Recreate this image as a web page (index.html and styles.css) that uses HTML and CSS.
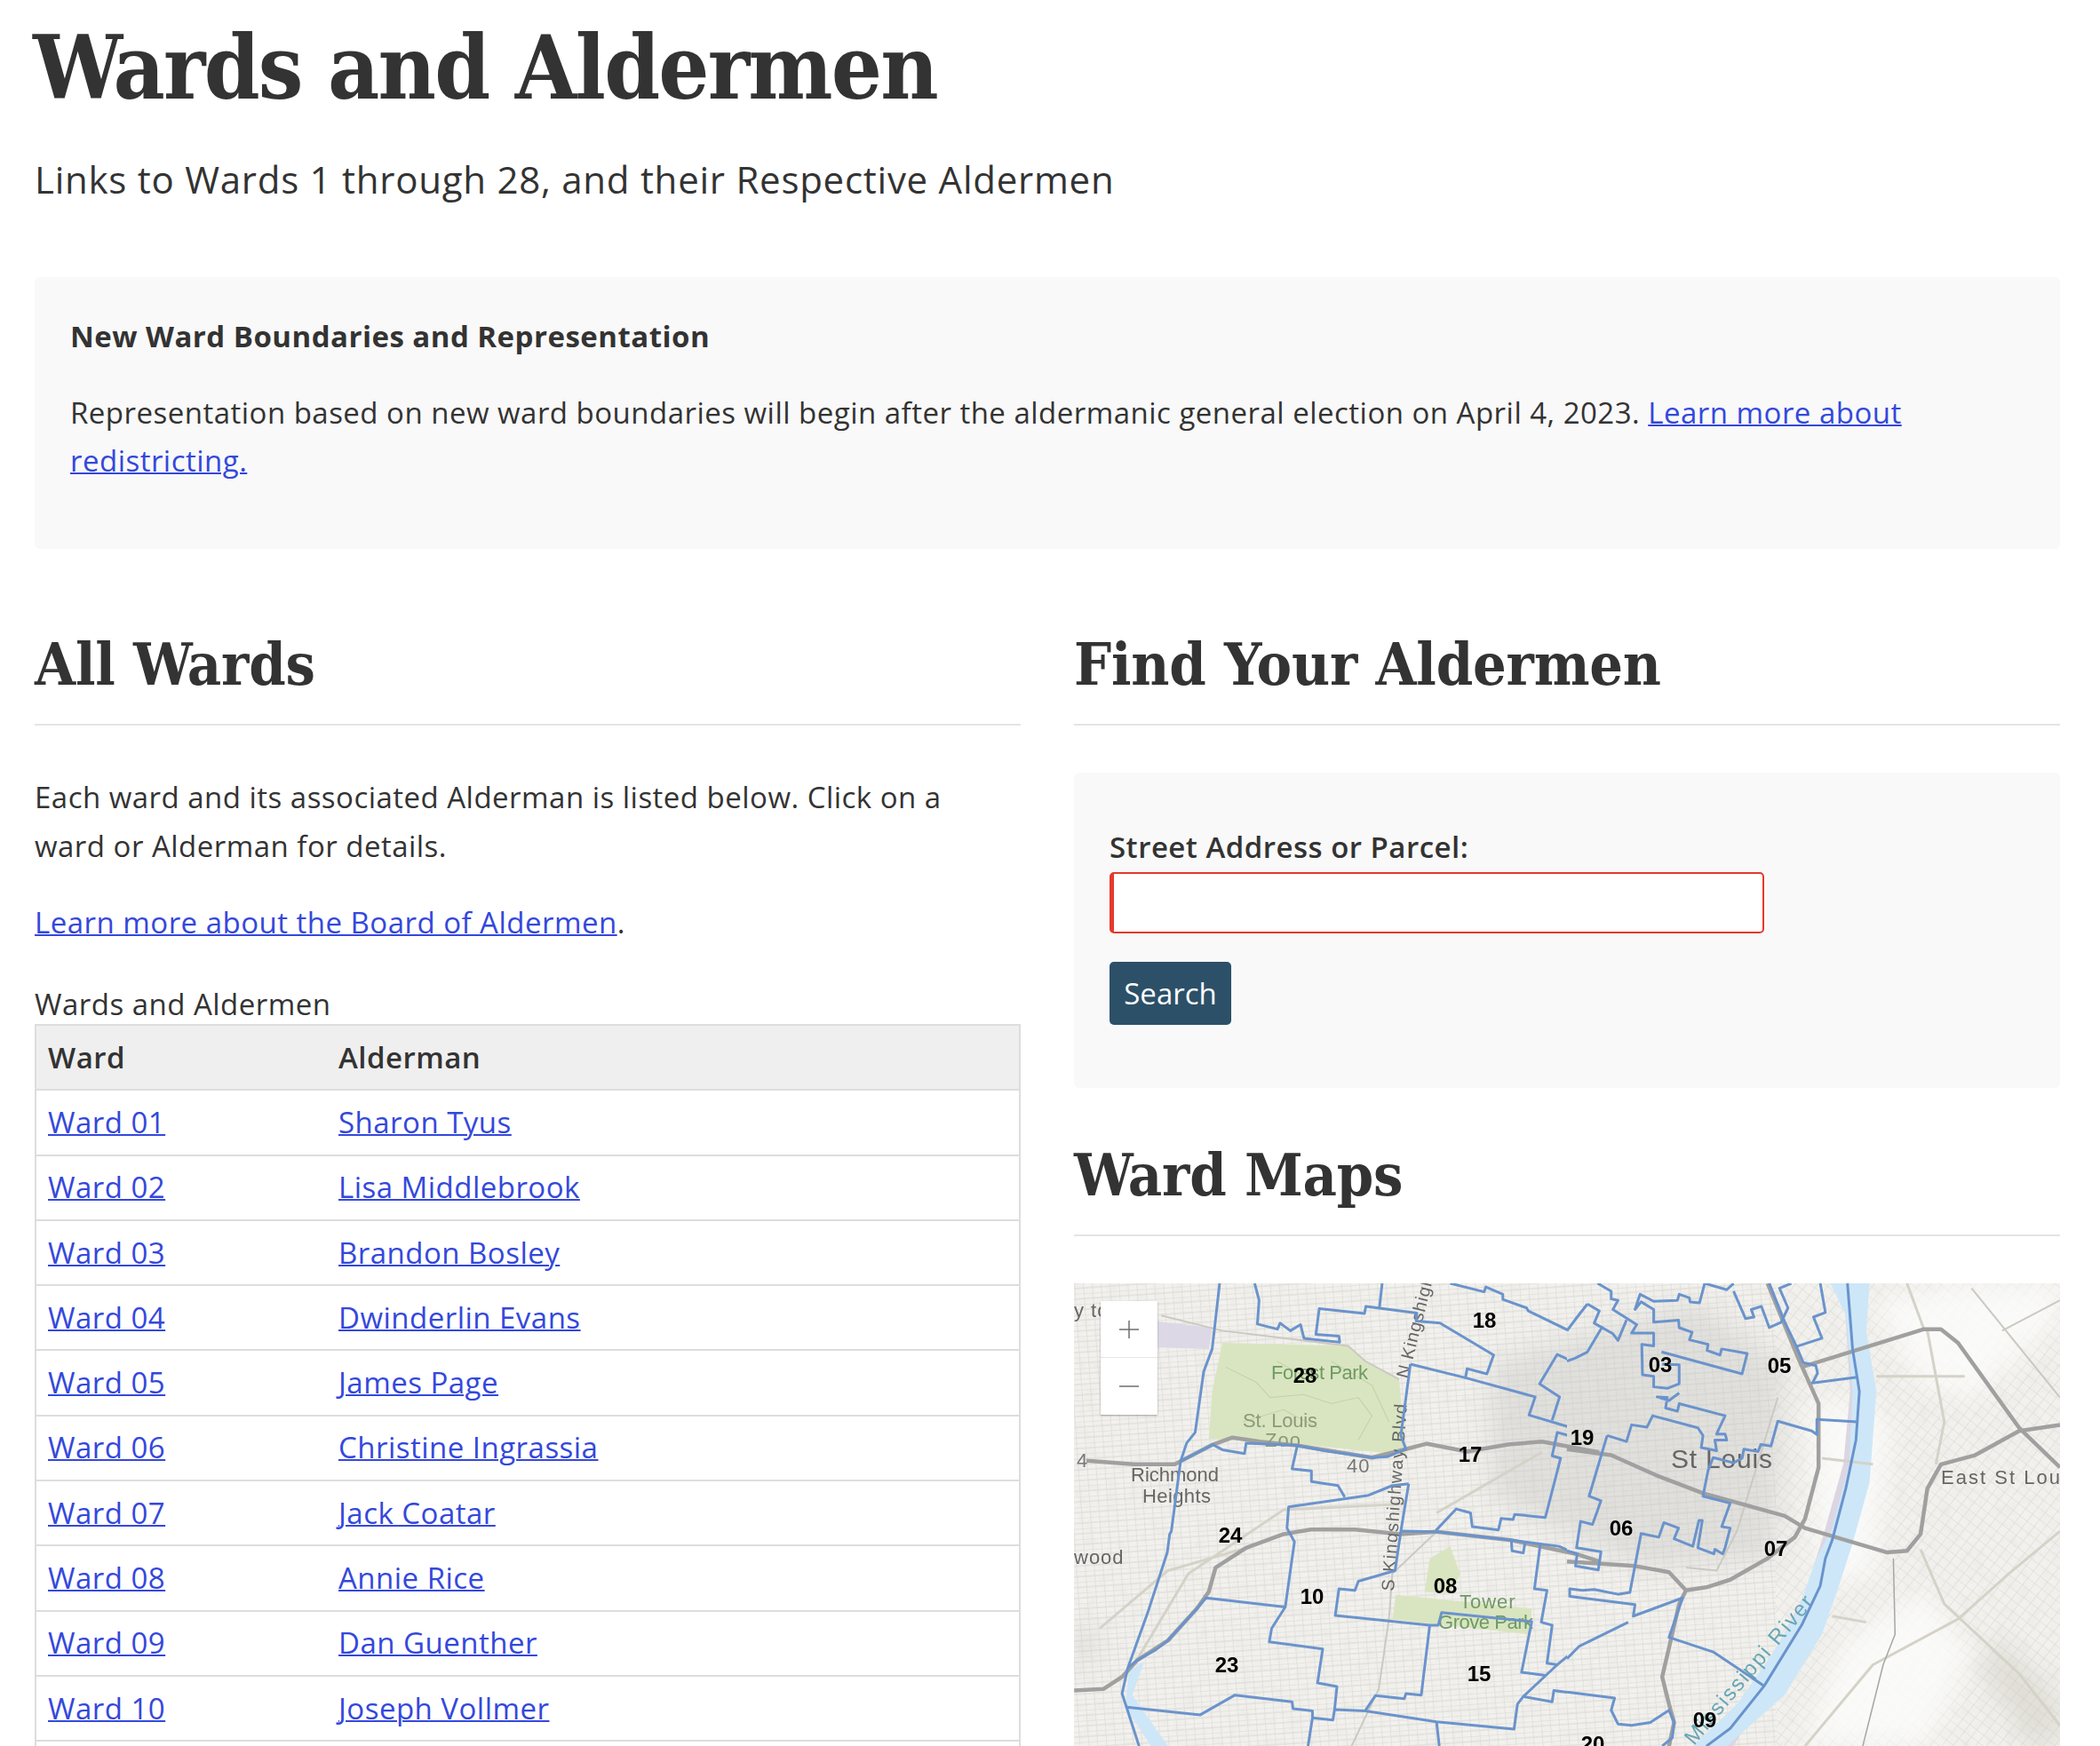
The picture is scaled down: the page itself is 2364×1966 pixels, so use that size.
FILE: index.html
```html
<!DOCTYPE html>
<html lang="en">
<head>
    <meta charset="UTF-8">
    <title>Wards and Aldermen</title>
    <link rel="stylesheet" href="styles.css">
</head>
<body>
    <div class="page">
        <h1>Wards and Aldermen</h1>
        <p class="subtitle">Links to Wards 1 through 28, and their Respective Aldermen</p>

        <div class="callout">
            <p class="callout-title">New Ward Boundaries and Representation</p>
            <p>Representation based on new ward boundaries will begin after the aldermanic general election on April 4, 2023. <a href="#">Learn more about redistricting.</a></p>
        </div>

        <div class="columns">
            <div class="column">
                <h2>All Wards</h2>
                <p class="intro">Each ward and its associated Alderman is listed below. Click on a ward or Alderman for details.</p>
                <p class="more"><a href="#">Learn more about the Board of Aldermen</a>.</p>

                <table class="wards">
                    <caption>Wards and Aldermen</caption>
                    <thead>
                        <tr><th class="ward-col">Ward</th><th>Alderman</th></tr>
                    </thead>
                    <tbody>
                        <tr><td><a href="#">Ward 01</a></td><td><a href="#">Sharon Tyus</a></td></tr>
                        <tr><td><a href="#">Ward 02</a></td><td><a href="#">Lisa Middlebrook</a></td></tr>
                        <tr><td><a href="#">Ward 03</a></td><td><a href="#">Brandon Bosley</a></td></tr>
                        <tr><td><a href="#">Ward 04</a></td><td><a href="#">Dwinderlin Evans</a></td></tr>
                        <tr><td><a href="#">Ward 05</a></td><td><a href="#">James Page</a></td></tr>
                        <tr><td><a href="#">Ward 06</a></td><td><a href="#">Christine Ingrassia</a></td></tr>
                        <tr><td><a href="#">Ward 07</a></td><td><a href="#">Jack Coatar</a></td></tr>
                        <tr><td><a href="#">Ward 08</a></td><td><a href="#">Annie Rice</a></td></tr>
                        <tr><td><a href="#">Ward 09</a></td><td><a href="#">Dan Guenther</a></td></tr>
                        <tr><td><a href="#">Ward 10</a></td><td><a href="#">Joseph Vollmer</a></td></tr>
                        <tr><td><a href="#">Ward 11</a></td><td><a href="#">Sarah Martin</a></td></tr>
                    </tbody>
                </table>
            </div>

            <div class="column">
                <h2>Find Your Aldermen</h2>
                <form class="search-box">
                    <label for="address">Street Address or Parcel:</label>
                    <input type="text" id="address">
                    <button type="button">Search</button>
                </form>

                <h2 class="maps-title">Ward Maps</h2>
                <div class="map">
                    <svg class="map-svg" viewBox="0 0 1110 521" width="1110" height="521">
                        <defs>
                            <pattern id="grid" width="10" height="12" patternUnits="userSpaceOnUse" patternTransform="rotate(-4)">
                                <path d="M0 0H10M0 6H10M0 0V12" class="grid-line"/>
                            </pattern>
                            <pattern id="gridEast" width="10" height="10" patternUnits="userSpaceOnUse" patternTransform="rotate(38)">
                                <path d="M0 0H10M0 0V10" class="grid-line"/>
                            </pattern>
                            <filter id="fine" x="0" y="0" width="100%" height="100%"><feGaussianBlur stdDeviation=".7"/></filter>
                            <filter id="soft" x="-30%" y="-30%" width="160%" height="160%"><feGaussianBlur stdDeviation="14"/></filter>
                            <filter id="mottle" x="0" y="0" width="100%" height="100%">
                                <feTurbulence type="fractalNoise" baseFrequency="0.08" numOctaves="4" seed="4"/>
                                <feColorMatrix values="0 0 0 0 .74  0 0 0 0 .73  0 0 0 0 .70  1.5 0 0 0 -.62"/>
                            </filter>
                            <clipPath id="westHalf"><rect x="0" y="0" width="555" height="521"/></clipPath>
                            <clipPath id="eastHalf"><rect x="555" y="0" width="555" height="521"/></clipPath>
                        </defs>

                        <!-- base map -->
                        <rect class="land" width="1110" height="521"/>
                        <g filter="url(#fine)">
                            <rect fill="url(#grid)" width="790" height="521"/>
                            <rect fill="url(#gridEast)" x="790" width="320" height="521"/>
                        </g>
                        <rect filter="url(#mottle)" width="1110" height="521" opacity=".4"/>

                        <g filter="url(#soft)">
                            <path class="urban" d="M470 90L700 20L800 90L790 310L640 320L470 240Z"/>
                            <path class="urban-light" d="M0 390L25 395L20 425L0 420Z"/>
                            <path class="pale" d="M820 521L870 400L960 345L1010 420L960 521Z"/>
                            <path class="pale" d="M900 20L1000 0H1110V40L1010 130L950 110Z"/>
                            <path class="pale" d="M830 130L920 150L900 330L840 340Z"/>
                            <path class="tan" d="M1040 400L1110 470V521H1075L1020 430Z"/>
                        </g>

                        <g transform="translate(-9,-15) scale(.3827,.3419)">
                            <path class="park" d="M460 240L830 250L880 300L980 360L1000 610L700 575L420 555L430 400Z"/>
                            <path class="park" d="M970 1070L1370 1115L1365 1200L960 1150Z"/>
                            <path class="park" d="M1055 1060L1070 950L1130 910L1160 1000L1130 1065Z"/>
                            <path class="contour" d="M470 320L560 370L600 420L700 410L780 440L860 420L900 480L860 560M520 500L640 460L740 520M780 300L900 380L950 500M620 300L700 350"/>
                            <path class="lilac" d="M270 170L430 190L420 260L270 255Z"/>
                            <path class="water" d="M185 1320L230 1290L195 1400L300 1568H250L175 1440Z"/>
                            <path class="road-thin" d="M280 150L460 200L830 250L880 300L980 360"/>
                            <path class="road-tan" d="M100 1180L300 990L530 915M200 1300L360 1000L640 790L1000 770M1090 800L1400 600"/>
                            <path class="road-thin" d="M1090 862L960 1000L950 1150L920 1380L840 1568"/>
                            <path class="highway" d="M24 1385L110 1380L165 1340L210 1285L300 1220L385 1115L420 1060L440 980L530 915L640 870L720 855L850 855L985 870L1090 862L1310 890L1500 935L1568 960"/>
                            <path class="highway" d="M60 628L200 640L320 640L432 575L490 552L570 565L680 578L900 618L1000 590L1060 572L1180 598L1300 575L1400 565L1568 600"/>
                        </g>

                        <g transform="translate(555,-15) scale(.3827,.3419)">
                            <path class="lilac-edge" d="M830 44L850 400L830 640L770 880L720 1060L600 1330L470 1568"/>
                            <path class="water" d="M775 44L820 150L840 400L830 640L780 850L730 960L680 1120L600 1270L500 1430L370 1568H470L640 1400L750 1200L800 1040L840 900L890 700L910 400L880 200L890 44Z"/>
                            <path class="road-tan" d="M1050 195L1000 44M1060 200L1110 500L1085 640M900 640L750 620M1040 920L1110 1100L1330 1330L1450 1500M700 1568L900 1300L1150 1150L1300 1000L1450 860M780 1140L880 1160M910 350H1170"/>
                            <path class="road-thin" d="M1190 60L1450 420M1450 100L1280 200"/>
                            <path class="road-thin" d="M620 420L560 640L500 860L440 990L350 980"/>
                            <path class="highway" d="M0 590L130 610L260 675L400 735L640 810L700 850L940 930L1000 925L1040 870L1060 720L1100 640L1200 610L1330 530L1450 510"/>
                            <path class="highway" d="M590 44L680 290L740 440L740 650L700 820L670 880L590 950L480 1020L410 1045L350 1055L330 1100L280 1340L300 1430L315 1490L300 1568"/>
                            <path class="highway" d="M0 960L200 975L300 995L350 1055"/>
                            <path class="highway" d="M690 320L1050 195L1100 195L1150 240L1330 520L1450 650"/>
                            <path class="road-mid" d="M960 950L965 1200L930 1300L870 1568"/>
                        </g>

                        <!-- place names -->
                        <g class="place">
                            <text x="0" y="38">y to</text>
                            <text x="0" y="316">wood</text>
                            <text x="3" y="207" class="route">4</text>
                            <text x="64" y="223" textLength="100">Richmond</text>
                            <text x="77" y="247" textLength="78">Heights</text>
                            <text x="190" y="162" class="place-zoo" textLength="85">St. Louis</text>
                            <text x="215" y="184" class="place-zoo">Zoo</text>
                            <text x="307" y="213" class="route">40</text>
                            <text class="place-city" x="672" y="208" textLength="117">St Louis</text>
                            <text x="976" y="226" textLength="155">East St Louis</text>
                        </g>
                        <g class="place place-park">
                            <text x="222" y="108" textLength="110">Forest Park</text>
                            <text x="434" y="366">Tower</text>
                            <text x="410" y="389" textLength="108">Grove Park</text>
                        </g>
                        <g class="place place-road">
                            <text transform="translate(376,108) rotate(-76)">N Kingshighway</text>
                            <text transform="translate(360,347) rotate(-86)" textLength="212">S Kingshighway Blvd</text>
                        </g>
                        <text class="place place-river" transform="translate(698,521) rotate(-50)">Mississippi River</text>

                        <!-- ward boundaries -->
                        <g clip-path="url(#westHalf)">
                            <g transform="translate(-9,-15) scale(.3827,.3419)" class="wards-lines">
                                <path d="M452 44L430 260L405 335L380 535L355 570L337 630L310 860L305 870L298 930L240 1130L182 1310L165 1395L178 1440L215 1568"/>
                                <path d="M337 630L432 575L460 592L525 605L530 570L680 578L760 595L900 618L945 615L1000 590L985 545L1000 420L1013 310"/>
                                <path d="M555 44L568 100L563 178L622 195L630 175L660 200L690 180L700 225L805 238L803 218L735 212L745 127L878 143L882 120L1032 142L1030 168L1100 175L1258 280L1238 342L1180 325L1175 355"/>
                                <path d="M930 44L922 124"/>
                                <path d="M1013 310L1175 355L1380 418L1362 478L1482 518L1478 545L1445 535L1430 612L1455 620L1410 815L1320 805L1315 822L1280 818L1272 856L1195 845L1190 800L1148 787L1088 858"/>
                                <path d="M680 580L665 655L722 662L722 697L800 710L820 748"/>
                                <path d="M1008 704L960 710L890 742L655 780L650 850L672 895L645 1110L412 1080L385 1115L300 1220L265 1250L210 1285L182 1310"/>
                                <path d="M1008 704L985 860L968 990L860 1025L850 1055L803 1050L792 1138L1070 1170L1045 1400L1000 1395L995 1412L910 1402L880 1452L790 1448L785 1482L725 1475L712 1568"/>
                                <path d="M985 860L1090 862L1310 890L1450 910L1500 935L1500 972L1568 985"/>
                                <path d="M1310 890L1312 925L1345 932L1350 900"/>
                                <path d="M1395 905L1378 1050L1415 1055L1398 1160L1430 1170L1415 1295L1445 1300L1510 1240L1568 1208"/>
                                <path d="M1445 1300L1345 1405L1328 1430L1318 1512L1090 1488L880 1452"/>
                                <path d="M1070 1170L1095 1170L1105 1128L1370 1158L1340 1325L1410 1335"/>
                                <path d="M645 1110L605 1180L598 1225L755 1248L740 1360L797 1372L790 1448"/>
                                <path d="M178 1440L395 1465L497 1400L665 1422L668 1445L725 1452L725 1475"/>
                                <path d="M1090 1488L1098 1568"/>
                                <path d="M1345 1405L1430 1422L1435 1385L1568 1405"/>
                                <path d="M1130 44L1230 72L1235 56L1285 80L1285 97L1355 125L1360 135L1480 200L1505 155L1530 115L1568 135"/>
                                <path d="M1568 200L1530 280L1498 305L1445 278L1393 375L1452 418L1430 495"/>
                            </g>
                        </g>
                        <g clip-path="url(#eastHalf)">
                            <g transform="translate(555,-15) scale(.3827,.3419)" class="wards-lines">
                                <path d="M90 44L130 70L130 95L150 100L135 130L205 180L190 208L255 208L255 250L220 245L222 345L255 350L255 385L295 390L330 375L330 312L280 310"/>
                                <path d="M278 270L515 342L530 275L455 260L450 280L412 265L415 245L360 230L368 205L330 190L328 165L255 172L255 130L218 105L200 130L215 80L255 103L325 100L330 80L360 92L362 105L390 108L405 44"/>
                                <path d="M405 44L470 65L490 44M490 70L525 160L550 155L542 130L572 120L595 190L630 172L650 125L625 60L660 44"/>
                                <path d="M595 44L640 170L675 252L750 225L725 155L760 140L745 44"/>
                                <path d="M675 252L695 305L732 315L737 340L722 372L853 353M853 500L735 492L735 542L720 530L620 498L600 580L570 575L562 598L520 590L515 620L490 635L430 618L415 660L400 745L480 768L455 845L480 850L465 915L458 935L435 920L432 935L385 915L398 825L388 825L370 910L315 885L328 850L285 832L270 880L218 868L185 1062L150 1068L80 1052L45 1055L8 1050L8 1075L200 1102L195 1140L340 1080L300 1210L430 1258L580 1370"/>
                                <path d="M825 44L840 260L860 400L850 560L820 720L780 890L760 950L745 1040L690 1170L580 1370L480 1510L410 1568"/>
                                <path d="M60 112L95 135L80 175L135 210L150 232L175 165M105 185L60 270L25 290L0 300M0 200L30 155L60 112"/>
                                <path d="M118 545L175 565L190 510L235 518L252 480L385 520L400 545L395 585L440 595L435 560L470 560L465 540L440 540L465 480L330 440L325 465L290 455L295 420L265 418L300 430L330 405"/>
                                <path d="M118 545L65 745L100 760L75 838L40 828L28 915L100 928L92 988L25 975L30 935L0 925"/>
                                <path d="M180 1160L35 1240L0 1280M0 1390L140 1410L130 1450L150 1495L190 1500L245 1490L300 1450L315 1490L310 1540L280 1568"/>
                            </g>
                        </g>

                        <!-- ward numbers -->
                        <g class="ward-label">
                            <text x="462" y="50">18</text>
                            <text x="260" y="112">28</text>
                            <text x="446" y="201">17</text>
                            <text x="572" y="182">19</text>
                            <text x="176" y="292">24</text>
                            <text x="268" y="361">10</text>
                            <text x="418" y="349">08</text>
                            <text x="172" y="438">23</text>
                            <text x="456" y="448">15</text>
                            <text x="660" y="100">03</text>
                            <text x="794" y="101">05</text>
                            <text x="616" y="284">06</text>
                            <text x="790" y="307">07</text>
                            <text x="710" y="500">09</text>
                            <text x="584" y="527">20</text>
                        </g>
                    </svg>

                    <div class="zoom-control">
                        <button type="button" class="zoom-button zoom-in" aria-label="Zoom in">
                            <svg viewBox="0 0 24 24" width="24" height="24"><path d="M1 12H23M12 2V22"/></svg>
                        </button>
                        <button type="button" class="zoom-button" aria-label="Zoom out">
                            <svg viewBox="0 0 24 24" width="24" height="24"><path d="M1 12H23"/></svg>
                        </button>
                    </div>
                </div>
            </div>
        </div>
    </div>
</body>
</html>
```

FILE: styles.css
```css
html, body {
    margin: 0;
    padding: 0;
    background-color: #fff;
}

body {
    font-family: "Open Sans", "Noto Sans", sans-serif;
    font-size: 33px;
    line-height: 54px;
    letter-spacing: 0.48px;
    color: #333;
}

.page {
    height: 1966px;
    overflow: hidden;
    padding: 0 45px 0 39px;
    box-sizing: border-box;
}

h1, h2 {
    font-family: "DejaVu Serif Condensed", "DejaVu Serif", serif;
    font-weight: bold;
    color: #333;
}

h1 {
    font-size: 100px;
    line-height: 130px;
    margin: 11px 0 0 -2px;
    letter-spacing: -1.8px;
}

h2 {
    font-size: 66px;
    line-height: 90px;
    margin: 0;
    padding-bottom: 22px;
    border-bottom: 2px solid #e4e4e4;
    letter-spacing: -0.2px;
}

p {
    margin: 0;
}

a {
    color: #3448dc;
    text-decoration: underline;
    text-decoration-thickness: 2px;
}

.subtitle {
    font-size: 42px;
    line-height: 60px;
    margin-top: 31px;
    letter-spacing: 0.75px;
}

.callout {
    margin-top: 80px;
    height: 306px;
    box-sizing: border-box;
    padding: 40px 40px 0;
    background-color: #f9f9f9;
    border-radius: 6px;
}

.callout-title {
    font-weight: bold;
    margin-bottom: 32px;
}

.columns {
    display: grid;
    grid-template-columns: 1110px 1110px;
    column-gap: 60px;
    margin-top: 85px;
}

.intro {
    margin-top: 53px;
    padding-right: 40px;
    line-height: 55px;
}

.more {
    margin-top: 32px;
}

.wards {
    width: 100%;
    margin-top: 43px;
    border-collapse: collapse;
    table-layout: fixed;
}

.wards caption {
    text-align: left;
    line-height: 44px;
}

.wards th,
.wards td {
    height: 73.3px;
    padding: 0 13px;
    box-sizing: border-box;
    border-top: 2px solid #ddd;
    border-bottom: 2px solid #ddd;
    text-align: left;
}

.wards th {
    background-color: #efefef;
    font-weight: 600;
}

.wards tr > :first-child {
    border-left: 2px solid #ddd;
}

.wards tr > :last-child {
    border-right: 2px solid #ddd;
}

.ward-col {
    width: 328px;
}

.search-box {
    margin-top: 53px;
    height: 355px;
    box-sizing: border-box;
    padding: 56px 40px 0;
    background-color: #f9f9f9;
    border-radius: 6px;
}

.search-box label {
    display: block;
    font-weight: 600;
    line-height: 56px;
}

.search-box input {
    display: block;
    width: 737px;
    height: 69px;
    box-sizing: border-box;
    background-color: #fff;
    border: 2px solid #e5392c;
    border-left-width: 5px;
    border-radius: 5px;
    outline: none;
}

.search-box button {
    display: block;
    margin-top: 32px;
    width: 137px;
    height: 71px;
    padding: 0;
    border: none;
    border-radius: 5px;
    background-color: #2c5068;
    color: #fff;
    font: inherit;
    letter-spacing: 0;
}

.maps-title {
    margin-top: 53px;
}

.map {
    position: relative;
    margin-top: 53px;
    width: 1110px;
    height: 521px;
    overflow: hidden;
}

.map-svg {
    display: block;
}

.land { fill: #f2f1ed; }
.grid-line { fill: none; stroke: #d8d8d3; stroke-width: 1.2; }
.urban { fill: #c6c6c3; opacity: .38; }
.urban-light { fill: #c8c7c2; opacity: .5; }
.pale { fill: #fcfcfa; opacity: .85; }
.tan { fill: #c8c4ba; opacity: .4; }
.park { fill: #d9e5c0; }
.contour { fill: none; stroke: #c3d2a6; stroke-width: 3; }
.lilac { fill: #dcd8e6; }
.lilac-edge { fill: none; stroke: #dcd6e2; stroke-width: 34; }
.water { fill: #cde7f8; }

.highway,
.road-thin,
.road-tan,
.road-mid,
.wards-lines path {
    fill: none;
    stroke-linejoin: round;
    vector-effect: non-scaling-stroke;
}

.highway { stroke: #a0a0a0; stroke-width: 4.5px; }
.road-thin { stroke: #cbc9c1; stroke-width: 2px; }
.road-tan { stroke: #d5d2c8; stroke-width: 3px; }
.road-mid { stroke: #a6a6a6; stroke-width: 1.5px; }
.wards-lines path { stroke: #6a93cc; stroke-width: 3px; }

.place {
    font-family: "Liberation Sans", Arial, sans-serif;
    font-size: 22px;
    letter-spacing: 1px;
    fill: #666;
}

.place-zoo { fill: #8b9a7a; }
.place-city { font-size: 30px; letter-spacing: 3px; }
.route { fill: #777; }
.place-park { fill: #6f9a63; }
.place-road { fill: #666; font-size: 20px; }
.place-river { fill: #66a5b5; font-size: 24px; letter-spacing: 2px; }

.ward-label {
    font-family: "Liberation Sans", Arial, sans-serif;
    font-size: 24px;
    font-weight: bold;
    letter-spacing: 0;
    fill: #000;
    text-anchor: middle;
}

.zoom-control {
    position: absolute;
    left: 30px;
    top: 20px;
    width: 64px;
    background-color: #fff;
    box-shadow: 0 1px 2px rgba(0, 0, 0, 0.35);
}

.zoom-button {
    display: flex;
    align-items: center;
    justify-content: center;
    width: 64px;
    height: 64px;
    padding: 0;
    border: none;
    background-color: #fff;
}

.zoom-in {
    border-bottom: 1px solid #e6e6e6;
}

.zoom-button path {
    fill: none;
    stroke: #6e6e6e;
    stroke-width: 1.5;
}
```
